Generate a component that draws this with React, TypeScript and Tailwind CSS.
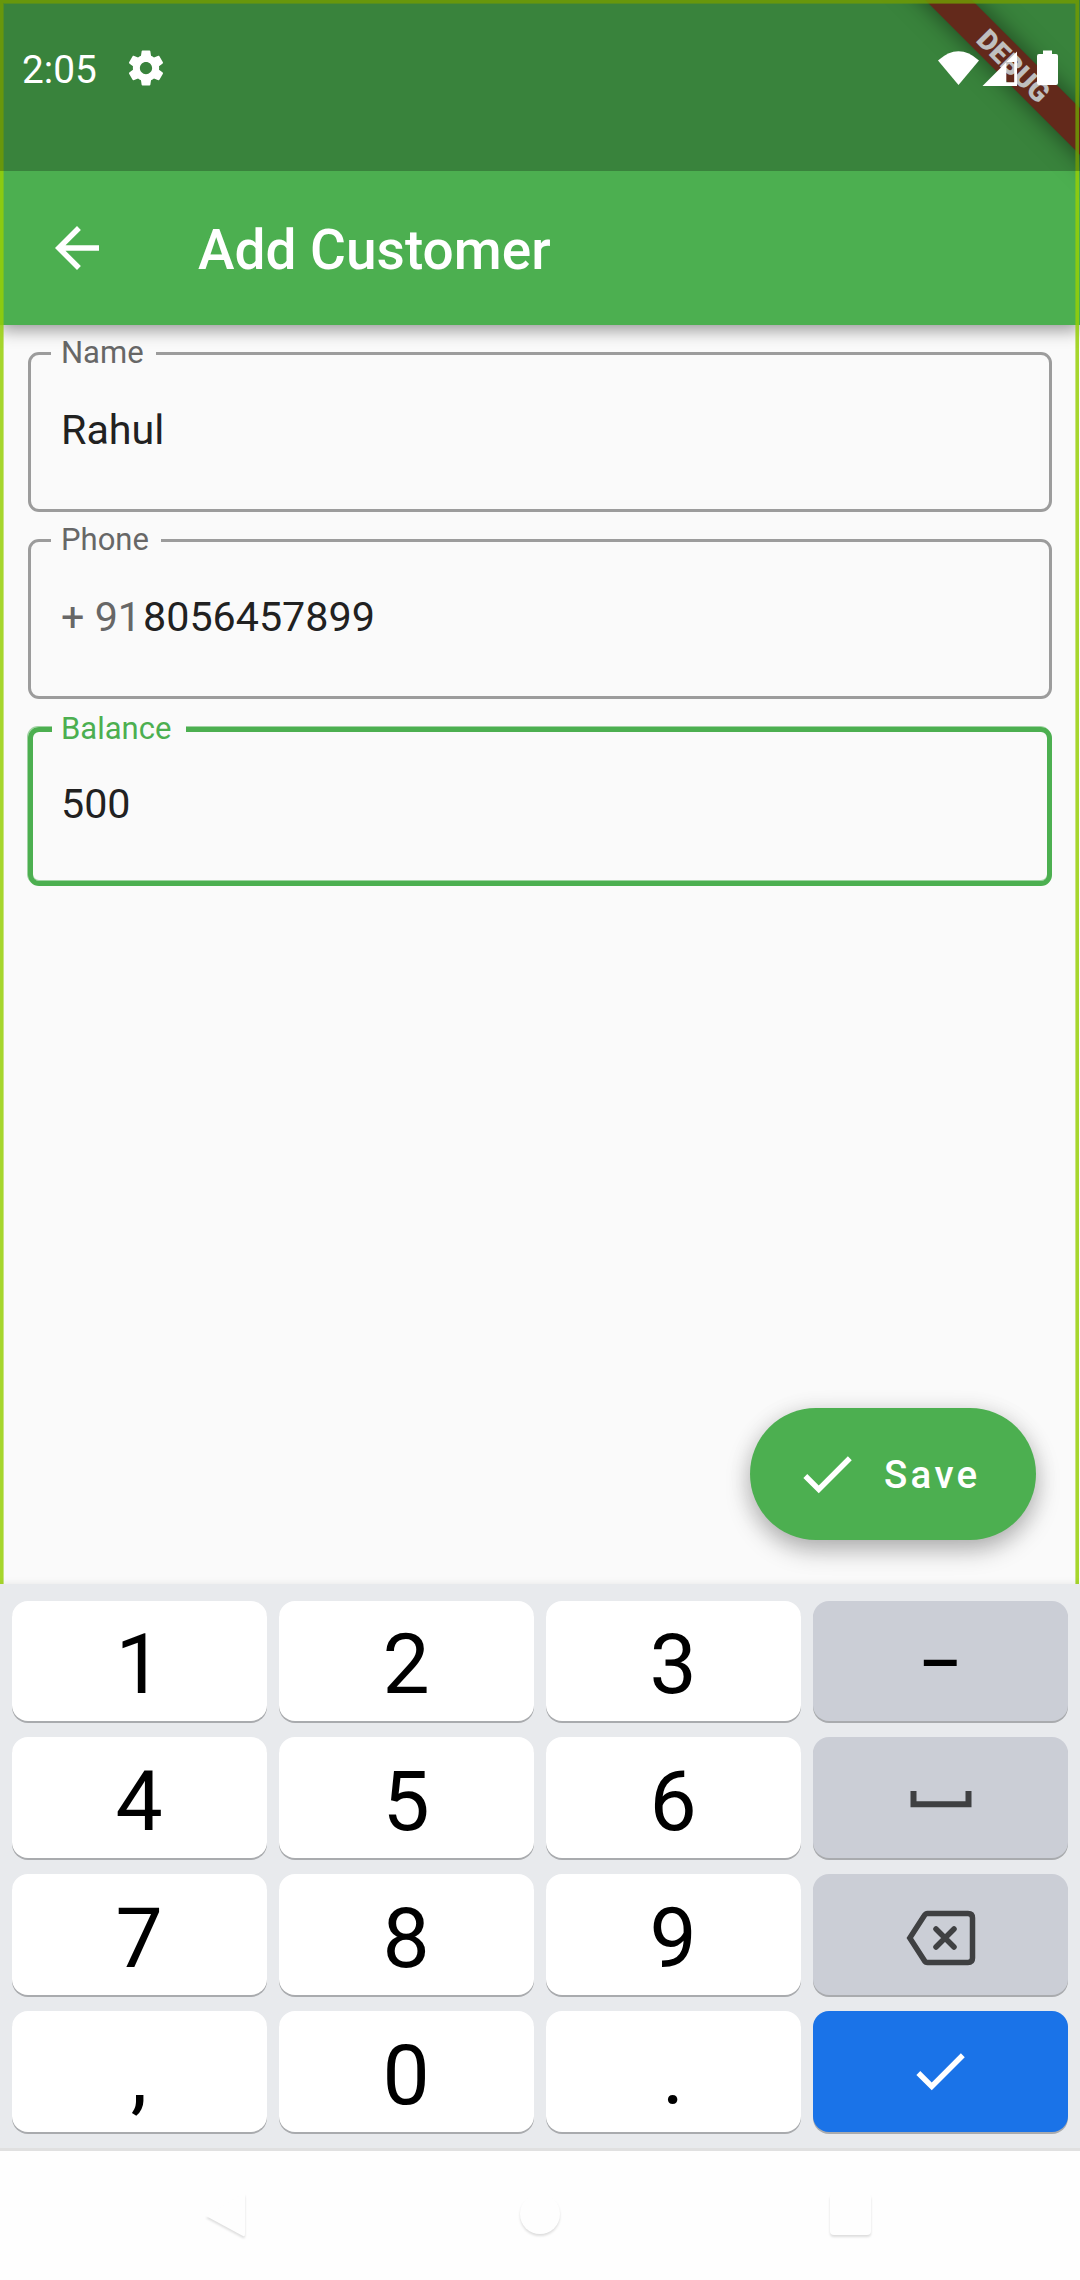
import type { ReactNode } from "react";
import { MdArrowBack, MdCheck } from "react-icons/md";

function GearIcon() {
  return (
    <svg viewBox="0 0 24 24" className="h-[42px] w-[42px] fill-white">
      <path d="M19.43 12.98c.04-.32.07-.64.07-.98s-.03-.66-.07-.98l2.11-1.65c.19-.15.24-.42.12-.64l-2-3.46c-.12-.22-.39-.3-.61-.22l-2.49 1c-.52-.4-1.08-.73-1.69-.98l-.38-2.65C14.46 2.18 14.25 2 14 2h-4c-.25 0-.46.18-.49.42l-.38 2.65c-.61.25-1.17.59-1.69.98l-2.49-1c-.23-.09-.49 0-.61.22l-2 3.46c-.13.22-.07.49.12.64l2.11 1.65c-.04.32-.07.65-.07.98s.03.66.07.98l-2.11 1.65c-.19.15-.24.42-.12.64l2 3.46c.12.22.39.3.61.22l2.49-1c.52.4 1.08.73 1.69.98l.38 2.65c.03.24.24.42.49.42h4c.25 0 .46-.18.49-.42l.38-2.65c.61-.25 1.17-.59 1.69-.98l2.49 1c.23.09.49 0 .61-.22l2-3.46c.12-.22.07-.49-.12-.64l-2.11-1.65zM12 15.5c-1.93 0-3.5-1.57-3.5-3.5s1.57-3.5 3.5-3.5 3.5 1.57 3.5 3.5-1.57 3.5-3.5 3.5z" />
    </svg>
  );
}

function StatusBar() {
  return (
    <div className="relative z-30 flex h-[171px] items-start bg-black/25 text-white">
      <div className="flex h-[136px] w-full items-center pl-[22px] pr-[22px]">
        <span className="mt-[5px] w-[76px] text-[38.8px] leading-none">2:05</span>
        <span className="-mt-px ml-[27px]">
          <GearIcon />
        </span>
        <div className="ml-auto flex items-center">
          <svg viewBox="0 0 41 36" className="h-[36px] w-[41px] fill-white">
            <path d="M0 10.5Q20.5 -8 41 10.5L20.5 35Z" />
          </svg>
          <svg viewBox="0 0 36 36" className="ml-[3px] h-[36px] w-[36px] fill-white">
            <path fillRule="evenodd" d="M0.5 36L35 1.5V36ZM24.3 12V32.3H32.2V12Z" />
          </svg>
          <svg viewBox="0 0 21 36" className="ml-[19px] h-[36px] w-[21px] fill-white">
            <path d="M6 0.5H15V4H19Q21 4 21 6V33Q21 35 19 35H2Q0 35 0 33V6Q0 4 2 4H6Z" />
          </svg>
        </div>
      </div>
    </div>
  );
}

function AppBar() {
  return (
    <header className="relative z-10 flex h-[154px] items-center bg-[#4caf50] pl-[44px] text-white">
      <MdArrowBack className="h-[66px] w-[66px]" />
      <h1 className="ml-[88px] mt-[5px] text-[55px] font-medium leading-none">Add Customer</h1>
    </header>
  );
}

function Field({ label, prefix, value, focused }: { label: string; prefix?: string; value: string; focused?: boolean }) {
  return (
    <div
      className={
        focused
          ? "relative flex h-[159px] items-center rounded-[11px] border-[5px] border-[#4caf50] pl-[28px] shadow-[-1px_-1px_0_#a0d3a2,inset_0_-1px_0_#a0d3a2]"
          : "relative flex h-[160px] items-center rounded-[11px] border-[3px] border-[#9c9c9c] pl-[30px]"
      }
    >
      <span
        className={
          focused
            ? "absolute -top-[7px] left-[19px] flex h-[8px] items-center bg-[#fafafa] pl-[9px] pr-[15px] text-[31px] leading-none text-[#4caf50]"
            : "absolute -top-[5px] left-[20px] flex h-[6px] items-center bg-[#fafafa] pl-[10px] pr-[12px] text-[31px] leading-none text-[#676767]"
        }
      >
        <span className="-mt-[2px]">{label}</span>
      </span>
      <p className="-mt-[3px] whitespace-pre text-[41.25px] leading-none text-[#212121]">
        {prefix && <span className="mr-[2px] text-[#676767]">{prefix}</span>}
        {value}
      </p>
    </div>
  );
}

function Key({ children, tone = "light" }: { children: ReactNode; tone?: "light" | "dark" | "blue" }) {
  const base = "flex items-center justify-center rounded-[16px] text-[84px] leading-none shadow-[0_2px_0_#a9abae]";
  const tones = {
    light: "bg-white pt-[8px] pr-px text-black",
    dark: "bg-[#cbced6] text-black",
    blue: "bg-[#1a73e8] pr-[2px] text-white",
  };
  return <div className={`${base} ${tones[tone]}`}>{children}</div>;
}

function Keyboard() {
  return (
    <div className="relative z-20 h-[567px] border-b-[3px] border-[#e0e0e0] bg-[#e8eaed] px-[12px] pt-[17px] shadow-[0_0_8px_rgba(0,0,0,0.08)]">
      <div className="grid grid-cols-4 grid-rows-[120px_121px_121px_121px] gap-x-[12px] gap-y-[16px]">
        <Key>1</Key>
        <Key>2</Key>
        <Key>3</Key>
        <Key tone="dark">
          <span className="mt-[8px] inline-block scale-x-80">–</span>
        </Key>
        <Key>4</Key>
        <Key>5</Key>
        <Key>6</Key>
        <Key tone="dark">
          <svg viewBox="0 0 62 18" className="ml-px mt-[3px] h-[18px] w-[62px] fill-none stroke-[#3f4042]">
            <path d="M3.5 1V14.2H58.5V1" strokeWidth="6" />
          </svg>
        </Key>
        <Key>7</Key>
        <Key>8</Key>
        <Key>9</Key>
        <Key tone="dark">
          <svg viewBox="0 0 70 56" className="mt-[6px] h-[56px] w-[70px] fill-none stroke-[#3f4042]">
            <path d="M21.5 3.5H62Q66.5 3.5 66.5 8V48Q66.5 52.5 62 52.5H21.5Q19.5 52.5 18 50L3.8 28L18 6Q19.5 3.5 21.5 3.5Z" strokeWidth="5.5" />
            <path d="M30 19L48 37M48 19L30 37" strokeWidth="5.5" strokeLinecap="round" />
          </svg>
        </Key>
        <Key>,</Key>
        <Key>0</Key>
        <Key>.</Key>
        <Key tone="blue">
          <MdCheck className="-mt-[2px] h-[66px] w-[66px]" />
        </Key>
      </div>
    </div>
  );
}

function NavBar() {
  return (
    <nav className="relative z-20 flex h-[129px] items-start bg-[#fefefe] pl-[196px] pt-[34px]">
      <svg viewBox="0 0 60 64" className="h-[64px] w-[60px] fill-[#fefefe] drop-shadow-[0_2px_1px_rgba(0,0,0,0.13)]">
        <path d="M10 31L47 9Q49 8 49 10V49Q49 52 47 51Z" />
      </svg>
      <svg viewBox="0 0 60 64" className="ml-[254px] h-[64px] w-[60px] fill-[#fefefe] drop-shadow-[0_2px_1px_rgba(0,0,0,0.13)]">
        <circle cx="30" cy="29" r="20" />
      </svg>
      <svg viewBox="0 0 60 64" className="ml-[250px] h-[64px] w-[60px] fill-[#fefefe] drop-shadow-[0_2px_1px_rgba(0,0,0,0.13)]">
        <rect x="10" y="9" width="41" height="41" rx="4" />
      </svg>
    </nav>
  );
}

export default function App() {
  return (
    <div className="relative flex h-[2280px] w-[1080px] flex-col overflow-hidden bg-[#fafafa] font-['Roboto',sans-serif]">
      <div className="absolute left-0 top-0 z-10 h-[325px] w-full bg-[#4caf50] shadow-[0_5px_16px_rgba(0,0,0,0.4)]" />
      <div className="absolute inset-x-0 top-0 z-20 h-[325px] overflow-hidden">
        <div className="absolute left-[864px] top-[49px] flex h-[33px] w-[300px] rotate-45 items-center justify-center bg-[#853724] text-[28px] font-black leading-none text-white shadow-[0_0_24px_rgba(0,0,0,0.5)]">
          <span className="mt-[3px]">DEBUG</span>
        </div>
      </div>
      <div className="absolute left-0 top-0 z-20 h-[1584px] w-[1079px] border-[3px] border-b-0 border-[rgba(150,206,6,0.845)] shadow-[inset_1px_1px_0_rgba(150,206,6,0.5),inset_-1px_0_0_rgba(150,206,6,0.5)]" />
      <StatusBar />
      <AppBar />
      <main className="flex h-[1259px] flex-col px-[28px] pt-[27px]">
        <div className="flex flex-col">
          <Field label="Name" value="Rahul" />
          <div className="h-[27px]" />
          <Field label="Phone" prefix="+ 91" value="8056457899" />
          <div className="h-[28px]" />
          <Field label="Balance" value="500" focused />
        </div>
        <button className="mb-[44px] mr-[16px] mt-auto flex h-[132px] w-[286px] items-center self-end rounded-full bg-[#4caf50] pl-[44px] text-white shadow-[0_10px_24px_rgba(0,0,0,0.28),0_2px_24px_rgba(0,0,0,0.08)]">
          <MdCheck className="h-[66px] w-[66px]" />
          <span className="ml-[24px] mt-[2px] text-[38.5px] font-medium leading-none tracking-[3.3px]">Save</span>
        </button>
      </main>
      <Keyboard />
      <NavBar />
    </div>
  );
}
